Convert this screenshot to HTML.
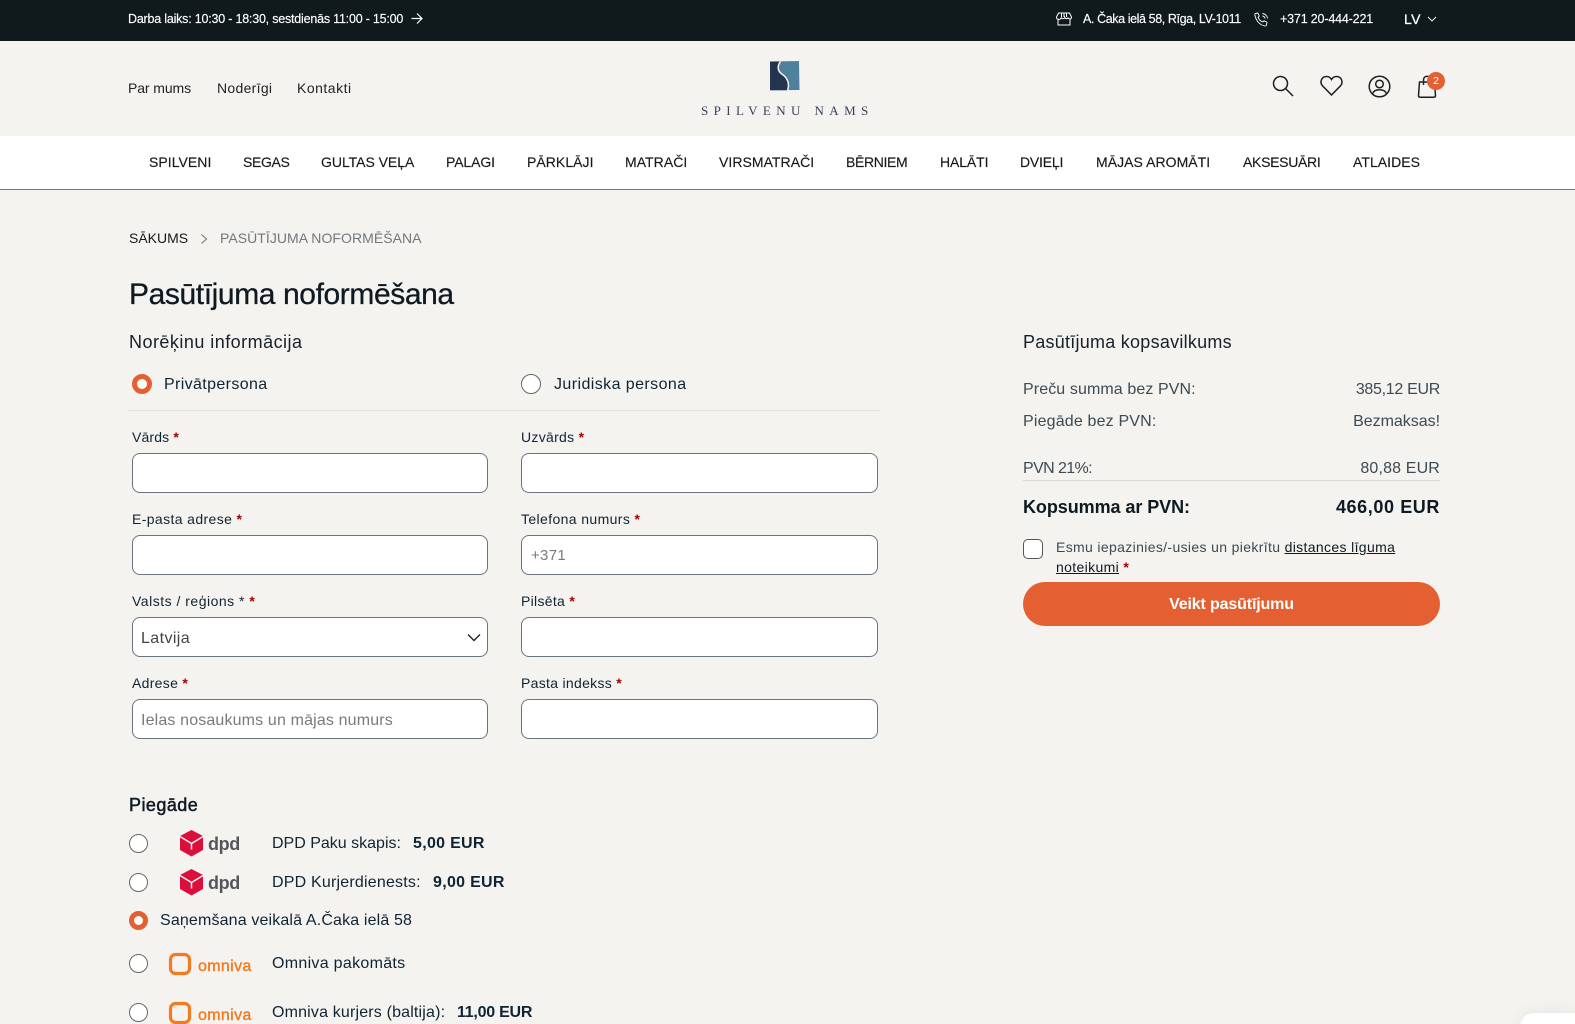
<!DOCTYPE html>
<html lang="lv">
<head>
<meta charset="utf-8">
<title>Pasūtījuma noformēšana</title>
<style>
*{box-sizing:border-box}
html,body{margin:0;padding:0;width:1575px;height:1024px;overflow:hidden}
body{background:#f5f3f0;font-family:"Liberation Sans",sans-serif;color:#0f2433}
#p{position:relative;width:1575px;height:1024px;overflow:hidden;background:#f5f3f0}
.t{position:absolute;white-space:nowrap;line-height:20px;height:20px}
.ab{position:absolute;display:block}
.top{position:absolute;left:0;top:0;width:1575px;height:41px;background:#101a1c}
.top .t{color:#fff;font-size:12.5px;-webkit-text-stroke:.15px #fff}
.hl{font-size:14px;color:#222}
.navbar{position:absolute;left:0;top:136px;width:1575px;height:54px;background:#fff;border-bottom:1px solid #777}
.n{font-size:14px;color:#16191c;letter-spacing:.05px;-webkit-text-stroke:.15px #16191c}
.lab{font-size:14px;color:#0f2433;letter-spacing:.3px}
.lab b,.req{color:#a00;font-weight:700}
.in{position:absolute;width:356px;height:40px;background:#fff;border:1px solid #6b7280;border-radius:8px}
.in.r{width:357px}
.ph{font-size:16px;letter-spacing:.15px;color:#7a7a7a}
.radio{position:absolute;width:20px;height:20px;border-radius:50%;background:#fff;border:1px solid #666}
.radio.on{border:5.5px solid #e46033}
.sum{font-size:16px;color:#3d4a52;letter-spacing:.1px}
.o{color:#f47a20;font-size:16px;letter-spacing:.35px;-webkit-text-stroke:.4px #f47a20}
.dp{font-size:18px;font-weight:700;color:#54565a;letter-spacing:-.4px}
.d{font-size:16px;letter-spacing:.2px;color:#0f2433}
.bd{font-weight:700;font-size:16px;letter-spacing:.3px;color:#0f2433}
</style>
</head>
<body>
<div id="p">
<div class="top">
  <span class="t" style="left:128px;top:9px;letter-spacing:-.21px">Darba laiks: 10:30 - 18:30, sestdienās 11:00 - 15:00</span>
  <svg class="ab" style="left:411px;top:12px" width="12" height="13" viewBox="0 0 12 13" fill="none" stroke="#fff" stroke-width="1.2"><path d="M.5 6.5h10.5M6 1.5l5 5-5 5"/></svg>
  <svg class="ab" style="left:1056px;top:12px" width="16" height="14" viewBox="0 0 16 14" fill="none" stroke="#fff" stroke-width="1"><path d="M2.5 1h11l2 4a1.7 1.7 0 0 1-3.4.4 1.7 1.7 0 0 1-3.3 0 1.7 1.7 0 0 1-1.7 1.2A1.7 1.7 0 0 1 5.2 5.4 1.7 1.7 0 0 1 .5 5zM2 6.500V13h12V6.500M5.500 1v4M8 1v4M10.500 1v4"/></svg>
  <span class="t" style="left:1083px;top:9px;letter-spacing:-.4px">A. Čaka ielā 58, Rīga, LV-1011</span>
  <svg class="ab" style="left:1254px;top:12px" width="15" height="15" viewBox="0 0 15 15" fill="none" stroke="#fff" stroke-width=".9"><path d="M1.5 1.5 3.8 1l1.5 3-1.3 1.300c.8 2 2.500 3.800 4.700 4.700L10 8.700l3 1.500-.5 2.800c-.2.8-1 1.200-1.800 1C5.500 12.800 1.800 8.500.9 3c-.1-.7.1-1.300.6-1.500zM8.500 1.500c2.700.3 4.700 2.300 5 5M8.500 4c1.300.2 2.300 1.200 2.500 2.500"/></svg>
  <span class="t" style="left:1280px;top:9px;letter-spacing:-.17px">+371 20-444-221</span>
  <span class="t" style="left:1404px;top:9px;font-size:14px;letter-spacing:.4px;-webkit-text-stroke:.3px #fff">LV</span>
  <svg class="ab" style="left:1427px;top:16px" width="10" height="6" viewBox="0 0 10 6" fill="none" stroke="#fff" stroke-width=".9"><path d="M1 1l4 4 4-4"/></svg>
</div>

<span class="t hl" style="left:128px;top:78px;letter-spacing:-.1px">Par mums</span>
<span class="t hl" style="left:217px;top:78px;letter-spacing:.3px">Noderīgi</span>
<span class="t hl" style="left:297px;top:78px;letter-spacing:.5px">Kontakti</span>

<svg class="ab" style="left:769px;top:60px" width="31" height="31" viewBox="0 0 31 31">
  <path d="M1 1.500 30 1l.5 29-29.500.3z" fill="#4f819c"/>
  <path d="M1 1.500H11C7 7 8.500 11.500 13 14.500c5 3.500 7.500 9.500 5 15.800L1 30.300z" fill="#24344f"/>
  <path d="M11.500 1.500C7.500 7 9 11.500 13.500 14.500c5 3.500 7.500 9.500 5 15.800" fill="none" stroke="#f0f2f2" stroke-width="1.500"/>
</svg>
<span class="t" style="left:701px;top:101px;font-family:'Liberation Serif',serif;font-size:13px;letter-spacing:5.4px;color:#3b4358">SPILVENU NAMS</span>

<svg class="ab" style="left:1272px;top:75px" width="22" height="22" viewBox="0 0 22 22" fill="none" stroke="#1d1f22" stroke-width="1.500"><circle cx="8.500" cy="8.500" r="7"/><path d="M13.500 13.500l7.500 7.500"/></svg>
<svg class="ab" style="left:1320px;top:75px" width="23" height="21" viewBox="0 0 23 21" fill="none" stroke="#1d1f22" stroke-width="1.500"><path d="M11.500 20 2.500 10.800C-.5 7.500 1.300 1.500 6.500 1.500c2.300 0 4 1.200 5 3 1-1.800 2.700-3 5-3 5.200 0 7 6 4 9.300z"/></svg>
<svg class="ab" style="left:1368px;top:75px" width="23" height="23" viewBox="0 0 23 23" fill="none" stroke="#1d1f22" stroke-width="1.500"><circle cx="11.500" cy="11.500" r="10.300"/><circle cx="11.500" cy="9" r="3.800"/><path d="M4.500 18.800c1-3 3.800-4 7-4s6 1 7 4"/></svg>
<svg class="ab" style="left:1417px;top:75px" width="20" height="23" viewBox="0 0 20 23" fill="none" stroke="#1d1f22" stroke-width="1.500"><path d="M2.500 7h15l1 13.500c0 1-.6 1.700-1.500 1.700H3c-.9 0-1.500-.7-1.500-1.700z"/><path d="M6.500 10V5c0-2.200 1.500-3.800 3.500-3.800S13.500 2.800 13.500 5v5"/></svg>
<div class="ab" style="left:1427px;top:72px;width:18px;height:18px;border-radius:50%;background:#e46033;color:#fff;font-size:10.5px;line-height:18px;text-align:center">2</div>

<div class="navbar"></div>
<span class="t n" style="left:149px;top:152px">SPILVENI</span>
<span class="t n" style="left:243px;top:152px;letter-spacing:-.35px">SEGAS</span>
<span class="t n" style="left:321px;top:152px;letter-spacing:-.03px">GULTAS VEĻA</span>
<span class="t n" style="left:446px;top:152px;letter-spacing:-.1px">PALAGI</span>
<span class="t n" style="left:527px;top:152px">PĀRKLĀJI</span>
<span class="t n" style="left:625px;top:152px">MATRAČI</span>
<span class="t n" style="left:719px;top:152px">VIRSMATRAČI</span>
<span class="t n" style="left:846px;top:152px;letter-spacing:-.35px">BĒRNIEM</span>
<span class="t n" style="left:940px;top:152px;letter-spacing:-.1px">HALĀTI</span>
<span class="t n" style="left:1020px;top:152px;letter-spacing:-.2px">DVIEĻI</span>
<span class="t n" style="left:1096px;top:152px">MĀJAS AROMĀTI</span>
<span class="t n" style="left:1243px;top:152px;letter-spacing:-.3px">AKSESUĀRI</span>
<span class="t n" style="left:1353px;top:152px">ATLAIDES</span>

<span class="t" style="left:129px;top:228px;font-size:14px;color:#16191c;letter-spacing:0">SĀKUMS</span>
<svg class="ab" style="left:200px;top:233px" width="8" height="12" viewBox="0 0 8 12" fill="none" stroke="#777" stroke-width="1.100"><path d="M1.500 1.500 6.500 6l-5 4.500"/></svg>
<span class="t" style="left:220px;top:228px;font-size:14px;color:#72777a;letter-spacing:.05px">PASŪTĪJUMA NOFORMĒŠANA</span>

<span class="t" style="left:129px;top:277px;height:36px;line-height:36px;font-size:30px;color:#0e1a22;letter-spacing:-.4px;-webkit-text-stroke:.3px #0e1a22">Pasūtījuma noformēšana</span>
<span class="t" style="left:129px;top:332px;font-size:18px;color:#16212a;letter-spacing:.47px">Norēķinu informācija</span>

<div class="radio on" style="left:132px;top:374px"></div>
<span class="t" style="left:164px;top:375px;font-size:16px;letter-spacing:.37px">Privātpersona</span>
<div class="radio" style="left:521px;top:374px"></div>
<span class="t" style="left:554px;top:375px;font-size:16px;letter-spacing:.42px">Juridiska persona</span>
<div class="ab" style="left:128px;top:410px;width:753px;height:1px;background:#e3e3e1"></div>

<span class="t lab" style="left:132px;top:427px;letter-spacing:.15px">Vārds <b>*</b></span>
<span class="t lab" style="left:521px;top:427px">Uzvārds <b>*</b></span>
<div class="in" style="left:132px;top:453px"></div>
<div class="in r" style="left:521px;top:453px"></div>

<span class="t lab" style="left:132px;top:509px;letter-spacing:.38px">E-pasta adrese <b>*</b></span>
<span class="t lab" style="left:521px;top:509px;letter-spacing:.38px">Telefona numurs <b>*</b></span>
<div class="in" style="left:132px;top:535px"></div>
<div class="in r" style="left:521px;top:535px"></div>
<span class="t ph" style="left:531px;top:546px;font-size:15px;letter-spacing:.3px">+371</span>

<span class="t lab" style="left:132px;top:591px;letter-spacing:.5px">Valsts / reģions * <b>*</b></span>
<span class="t lab" style="left:521px;top:591px">Pilsēta <b>*</b></span>
<div class="in" style="left:132px;top:617px"></div>
<div class="in r" style="left:521px;top:617px"></div>
<span class="t ph" style="left:141px;top:629px;color:#444;letter-spacing:.4px">Latvija</span>
<svg class="ab" style="left:467px;top:633px" width="14" height="9" viewBox="0 0 14 9" fill="none" stroke="#222" stroke-width="1.400"><path d="M1 1.500l6 6 6-6"/></svg>

<span class="t lab" style="left:132px;top:673px">Adrese <b>*</b></span>
<span class="t lab" style="left:521px;top:673px">Pasta indekss <b>*</b></span>
<div class="in" style="left:132px;top:699px"></div>
<div class="in r" style="left:521px;top:699px"></div>
<span class="t ph" style="left:141px;top:711px">Ielas nosaukums un mājas numurs</span>

<span class="t" style="left:129px;top:795px;font-size:18px;color:#0e1a22;letter-spacing:.45px;-webkit-text-stroke:.5px #0e1a22">Piegāde</span>

<div class="radio" style="left:129px;top:834px;width:19px;height:19px"></div>
<svg class="ab" style="left:179px;top:829px" width="25" height="28" viewBox="0 0 25 28"><path d="M12.500 1 24 7v14l-11.500 6.500L1 21V7z" fill="#dc0f3c"/><path d="M1 7.500l11.500 7 11.500-7M12.500 14.500v6" fill="none" stroke="#f5f3f0" stroke-width="1.500"/><path d="M7 4.200l10 6.300" fill="none" stroke="#dc0f3c" stroke-width="2"/></svg>
<span class="t dp" style="left:208px;top:834px">dpd</span>
<span class="t d" style="left:272px;top:834px;letter-spacing:0">DPD Paku skapis:</span>
<span class="t bd" style="left:413px;top:834px">5,00 EUR</span>

<div class="radio" style="left:129px;top:873px;width:19px;height:19px"></div>
<svg class="ab" style="left:179px;top:868px" width="25" height="28" viewBox="0 0 25 28"><path d="M12.500 1 24 7v14l-11.500 6.500L1 21V7z" fill="#dc0f3c"/><path d="M1 7.500l11.500 7 11.500-7M12.500 14.500v6" fill="none" stroke="#f5f3f0" stroke-width="1.500"/><path d="M7 4.200l10 6.300" fill="none" stroke="#dc0f3c" stroke-width="2"/></svg>
<span class="t dp" style="left:208px;top:873px">dpd</span>
<span class="t d" style="left:272px;top:873px">DPD Kurjerdienests:</span>
<span class="t bd" style="left:433px;top:873px">9,00 EUR</span>

<div class="radio on" style="left:129px;top:911px;width:19px;height:19px"></div>
<span class="t d" style="left:160px;top:911px;letter-spacing:.15px">Saņemšana veikalā A.Čaka ielā 58</span>

<div class="radio" style="left:129px;top:954px;width:19px;height:19px"></div>
<svg class="ab" style="left:167px;top:951px" width="26" height="26" viewBox="0 0 26 26" fill="none"><rect x="3.500" y="3.500" width="19" height="19" rx="5" stroke="#f47a20" stroke-width="3.200"/><path d="M1 5.500 6 1M20 1l5 4.500M25 20.500 20 25M6 25l-5-4.500" stroke="#f5f3f0" stroke-width="1.300"/></svg>
<span class="t o" style="left:198px;top:957px">omniva</span>
<span class="t d" style="left:272px;top:954px;letter-spacing:.3px">Omniva pakomāts</span>

<div class="radio" style="left:129px;top:1003px;width:19px;height:19px"></div>
<svg class="ab" style="left:167px;top:1000px" width="26" height="26" viewBox="0 0 26 26" fill="none"><rect x="3.500" y="3.500" width="19" height="19" rx="5" stroke="#f47a20" stroke-width="3.200"/><path d="M1 5.500 6 1M20 1l5 4.500M25 20.500 20 25M6 25l-5-4.500" stroke="#f5f3f0" stroke-width="1.300"/></svg>
<span class="t o" style="left:198px;top:1006px">omniva</span>
<span class="t d" style="left:272px;top:1003px;letter-spacing:.17px">Omniva kurjers (baltija):</span>
<span class="t bd" style="left:457px;top:1003px;letter-spacing:-.25px">11,00 EUR</span>

<span class="t" style="left:1023px;top:332px;font-size:18px;color:#16212a;letter-spacing:.25px">Pasūtījuma kopsavilkums</span>
<span class="t sum" style="left:1023px;top:380px">Preču summa bez PVN:</span>
<span class="t sum" style="right:135px;top:380px;letter-spacing:-.3px">385,12 EUR</span>
<span class="t sum" style="left:1023px;top:412px;letter-spacing:.17px">Piegāde bez PVN:</span>
<span class="t sum" style="right:135px;top:412px;letter-spacing:-.03px">Bezmaksas!</span>
<span class="t sum" style="left:1023px;top:459px;letter-spacing:-.6px">PVN 21%:</span>
<span class="t sum" style="right:135px;top:459px;letter-spacing:.15px">80,88 EUR</span>
<div class="ab" style="left:1023px;top:480px;width:417px;height:1px;background:#d9d9d7"></div>
<span class="t" style="left:1023px;top:497px;font-size:18px;font-weight:700;color:#0e1a22;letter-spacing:-.07px">Kopsumma ar PVN:</span>
<span class="t" style="right:135px;top:497px;font-size:18px;font-weight:700;color:#0e1a22;letter-spacing:.6px">466,00 EUR</span>

<div class="ab" style="left:1023px;top:539px;width:20px;height:20px;background:#fff;border:1px solid #555;border-radius:5px"></div>
<span class="t" style="left:1056px;top:537px;font-size:14px;color:#3d4a52;letter-spacing:.35px">Esmu iepazinies/-usies un piekrītu <u style="color:#0e1a22">distances līguma</u></span>
<span class="t" style="left:1056px;top:557px;font-size:14px;color:#3d4a52;letter-spacing:.35px"><u style="color:#0e1a22">noteikumi</u> <span class="req">*</span></span>

<div class="ab" style="left:1023px;top:582px;width:417px;height:44px;border-radius:22px;background:#e46033;color:#fff;text-align:center;font-size:16px;font-weight:700;line-height:45px;letter-spacing:-.15px">Veikt pasūtījumu</div>

<div class="ab" style="left:1520px;top:1013px;width:70px;height:40px;background:#fff;border-radius:14px;box-shadow:0 0 16px rgba(0,0,0,.07)"></div>
</div>
</body>
</html>
